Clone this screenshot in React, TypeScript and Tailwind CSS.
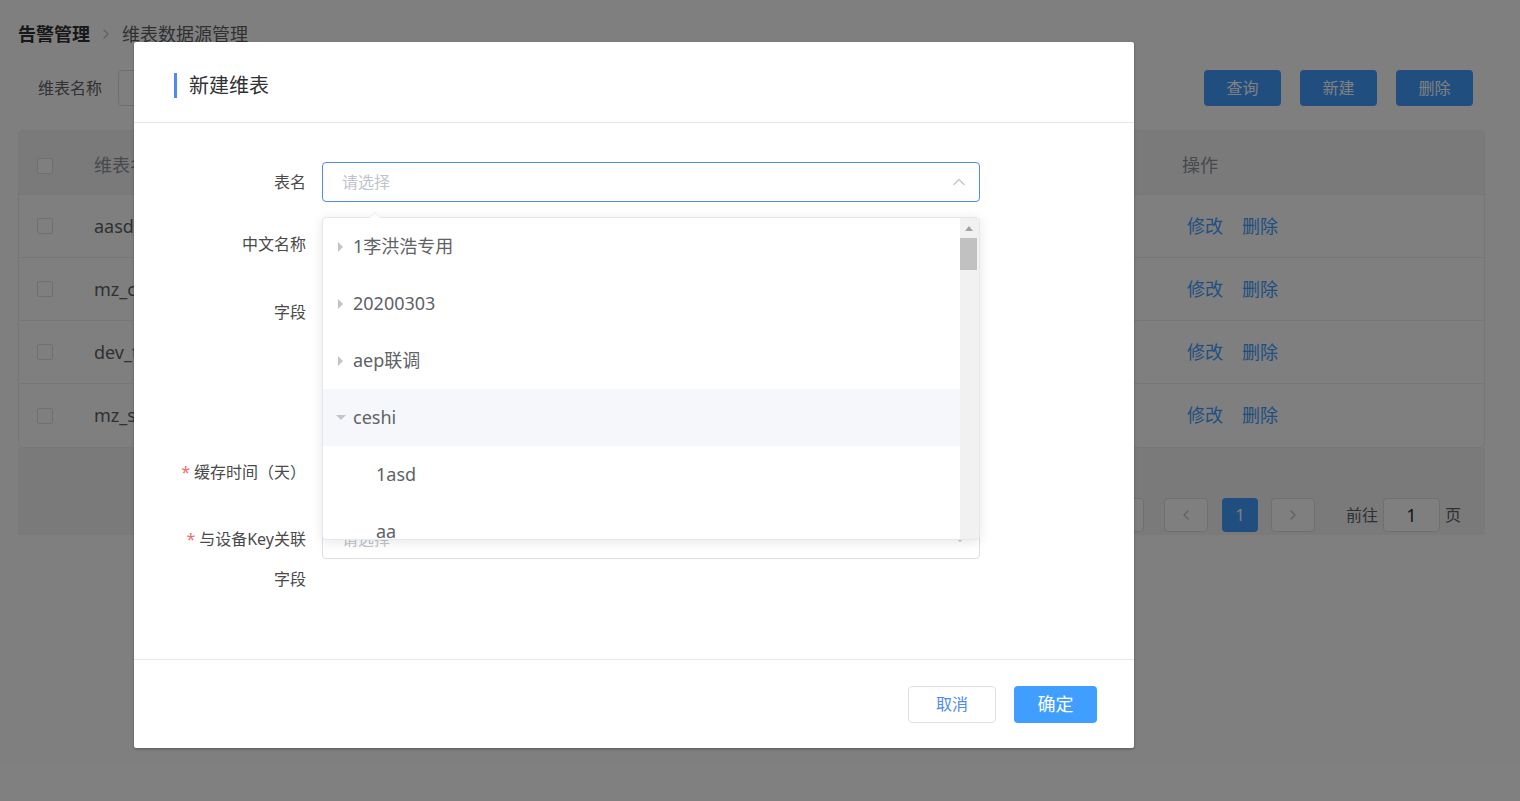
import { ChevronRight, ChevronLeft, ChevronUp, ChevronDown } from 'lucide-react';

const rows = ['aasd_dim_table', 'mz_cache_test', 'dev_test_dim', 'mz_sync_dim'];

const options = [
  { label: '1李洪浩专用', level: 0, open: false },
  { label: '20200303', level: 0, open: false },
  { label: 'aep联调', level: 0, open: false },
  { label: 'ceshi', level: 0, open: true, active: true },
  { label: '1asd', level: 1 },
  { label: 'aa', level: 1 },
];

function Caret({ open }: { open?: boolean }) {
  return open ? (
    <span className="block h-0 w-0 border-x-[5px] border-t-[5px] border-x-transparent border-t-[#c0c4cc]" />
  ) : (
    <span className="block h-0 w-0 border-y-[5px] border-l-[5px] border-y-transparent border-l-[#c0c4cc]" />
  );
}

function Checkbox() {
  return <span className="block h-[16px] w-[16px] rounded-[2px] border border-[#dcdfe6] bg-white" />;
}

function BackgroundPage() {
  return (
    <div className="flex flex-col px-[18px] pt-[20px]">
      {/* breadcrumb */}
      <div className="flex h-[28px] items-center text-[18px]">
        <span className="font-bold text-[#303133]">告警管理</span>
        <ChevronRight className="mx-[8px] h-[16px] w-[16px] text-[#c0c4cc]" />
        <span className="text-[#606266]">维表数据源管理</span>
      </div>

      {/* search bar */}
      <div className="mt-[22px] flex h-[36px] items-center">
        <span className="ml-[20px] w-[80px] text-[16px] text-[#606266]">维表名称</span>
        <div className="h-[36px] w-[220px] rounded-[4px] border border-[#dcdfe6] bg-white" />
        <div className="ml-auto mr-[29px] flex gap-[19px]">
          {['查询', '新建', '删除'].map((t) => (
            <button
              key={t}
              className="h-[36px] w-[77px] rounded-[4px] bg-[#409eff] text-[16px] text-white"
            >
              {t}
            </button>
          ))}
        </div>
      </div>

      {/* table */}
      <div className="mt-[24px] w-[1467px] rounded-[4px] border border-[#ebeef5] bg-white">
        <div className="flex h-[64px] items-center border-b border-[#ebeef5] bg-[#f4f5f7] pt-[6px] text-[18px] text-[#909399]">
          <div className="flex w-[75px] pl-[18px]">
            <Checkbox />
          </div>
          <span className="w-[1088px]">维表名称</span>
          <span>操作</span>
        </div>
        {rows.map((r) => (
          <div
            key={r}
            className="flex h-[63px] items-center border-b border-[#ebeef5] text-[18px] text-[#606266] last:border-b-0"
          >
            <div className="flex w-[75px] pl-[18px]">
              <Checkbox />
            </div>
            <span className="w-[1093px]">{r}</span>
            <span className="text-[#409eff]">修改</span>
            <span className="ml-[19px] text-[#409eff]">删除</span>
          </div>
        ))}
      </div>

      {/* pagination */}
      <div className="flex h-[87px] w-[1467px] items-end bg-[#f4f5f7] pb-[3px]">
        <div className="flex h-[34px] w-full items-center text-[16px] text-[#606266]">
          <div className="ml-auto h-[34px] w-[44px] rounded-[4px] border border-[#dcdfe6] bg-white" />
          <div className="ml-[20px] flex h-[34px] w-[44px] items-center justify-center rounded-[4px] border border-[#dcdfe6] bg-white">
            <ChevronLeft className="h-[16px] w-[16px] text-[#c0c4cc]" />
          </div>
          <div className="ml-[14px] flex h-[34px] w-[36px] items-center justify-center rounded-[4px] bg-[#409eff] text-white">
            1
          </div>
          <div className="ml-[13px] flex h-[34px] w-[44px] items-center justify-center rounded-[4px] border border-[#dcdfe6] bg-white">
            <ChevronRight className="h-[16px] w-[16px] text-[#c0c4cc]" />
          </div>
          <span className="ml-[31px]">前往</span>
          <div className="ml-[5px] flex h-[34px] w-[57px] items-center justify-center rounded-[4px] border border-[#dcdfe6] bg-white text-[18px] text-[#303133]">
            1
          </div>
          <span className="ml-[5px] mr-[24px]">页</span>
        </div>
      </div>
    </div>
  );
}

function FormLabel({ children, required }: { children: React.ReactNode; required?: boolean }) {
  return (
    <div className="w-[188px] shrink-0 pr-[16px] text-right text-[16px] leading-[40px] text-[#4a4a4a]">
      {required && <span className="mr-[4px] text-[#f56c6c]">*</span>}
      {children}
    </div>
  );
}

function Dropdown() {
  return (
    <div className="absolute left-[188px] top-[94px] z-10 h-[323px] w-[658px] rounded-[4px] border border-[#e4e7ed] bg-white shadow-[0_2px_12px_0_rgba(0,0,0,0.1)]">
      {/* popper arrow */}
      <span className="absolute left-[46px] top-[-6px] h-0 w-0 border-x-[6px] border-b-[6px] border-x-transparent border-b-[#e4e7ed]" />
      <span className="absolute left-[47px] top-[-5px] h-0 w-0 border-x-[5px] border-b-[5px] border-x-transparent border-b-white" />
      <div className="flex h-full">
        <div className="flex-1 overflow-hidden">
          {options.map((o) => (
            <div
              key={o.label}
              className={`flex h-[57px] shrink-0 items-center text-[18px] text-[#606266] ${
                o.active ? 'bg-[#f5f7fa]' : ''
              }`}
            >
              {o.level === 0 ? (
                <>
                  <span className="ml-[5px] flex w-[25px] justify-center">
                    <Caret open={o.open} />
                  </span>
                  <span>{o.label}</span>
                </>
              ) : (
                <span className="ml-[53px]">{o.label}</span>
              )}
            </div>
          ))}
        </div>
        {/* scrollbar */}
        <div className="flex w-[19px] flex-col items-center bg-[#f1f1f1] pr-[2px]">
          <span className="mt-[8px] h-0 w-0 border-x-[4px] border-b-[5px] border-x-transparent border-b-[#a3a3a3]" />
          <span className="mt-[7px] h-[32px] w-[17px] bg-[#c1c1c1]" />
        </div>
      </div>
    </div>
  );
}

function Modal() {
  return (
    <div className="absolute left-[134px] top-[42px] z-20 flex w-[1000px] flex-col rounded-[2px] bg-white shadow-[0_1px_3px_rgba(0,0,0,0.3)]">
      {/* header */}
      <div className="flex h-[81px] items-center border-b border-[#e4e7ed] pl-[40px] pt-[7px]">
        <span className="h-[25px] w-[3px] bg-[#4e8af0]" />
        <span className="ml-[12px] text-[20px] text-[#303133]">新建维表</span>
      </div>

      {/* body */}
      <div className="relative h-[536px] pt-[39px]">
        <div className="flex h-[40px]">
          <FormLabel>表名</FormLabel>
          <div className="flex h-[40px] w-[658px] items-center rounded-[4px] border border-[#4e8af0] px-[19px]">
            <span className="text-[16px] text-[#c0c4cc]">请选择</span>
            <ChevronUp className="ml-auto mr-[-9px] h-[20px] w-[20px] text-[#c0c4cc]" strokeWidth={1.5} />
          </div>
        </div>
        <div className="mt-[22px] flex h-[40px]">
          <FormLabel>中文名称</FormLabel>
          <div className="h-[40px] w-[658px] rounded-[4px] border border-[#dcdfe6]" />
        </div>
        <div className="mt-[28px] flex h-[160px]">
          <FormLabel>字段</FormLabel>
        </div>
        <div className="flex h-[40px]">
          <FormLabel required>缓存时间（天）</FormLabel>
          <div className="h-[40px] w-[658px] rounded-[4px] border border-[#dcdfe6]" />
        </div>
        <div className="mt-[27px] flex">
          <div className="w-[188px] shrink-0 pr-[16px] text-right text-[16px] leading-[40px] text-[#4a4a4a]">
            <span className="mr-[4px] text-[#f56c6c]">*</span>与设备Key关联
            <br />
            字段
          </div>
          <div className="flex h-[40px] w-[658px] items-center rounded-[4px] border border-[#dcdfe6] px-[19px]">
            <span className="text-[16px] text-[#c0c4cc]">请选择</span>
            <ChevronDown className="ml-auto mr-[-9px] h-[18px] w-[18px] text-[#c0c4cc]" strokeWidth={1.5} />
          </div>
        </div>

        <Dropdown />
      </div>

      {/* footer */}
      <div className="flex h-[89px] items-center justify-end gap-[18px] border-t border-[#e4e7ed] pr-[37px]">
        <button className="h-[37px] w-[88px] rounded-[4px] border border-[#dcdfe6] bg-white text-[16px] text-[#4e8af0]">
          取消
        </button>
        <button className="h-[37px] w-[83px] rounded-[4px] bg-[#409eff] text-[18px] text-white">
          确定
        </button>
      </div>
    </div>
  );
}

export default function App() {
  return (
    <div
      className="relative h-[801px] w-full overflow-hidden bg-white"
      style={{ fontFamily: '"Noto Sans", "Noto Sans CJK SC", sans-serif' }}
    >
      <BackgroundPage />
      {/* overlay */}
      <div className="absolute inset-0 z-10 bg-black/50" />
      <Modal />
    </div>
  );
}
